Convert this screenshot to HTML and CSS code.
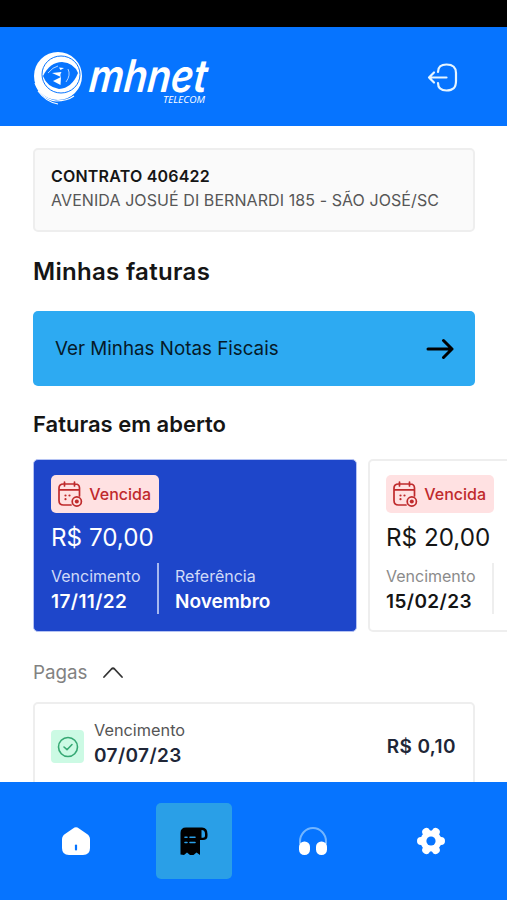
FILE: index.html
```html
<!DOCTYPE html>
<html lang="pt-BR">
<head>
<meta charset="utf-8">
<meta name="viewport" content="width=device-width, initial-scale=1">
<title>Minhas faturas</title>
<link rel="stylesheet" href="styles.css">
</head>
<body>
<svg class="symbols" aria-hidden="true">
  <symbol id="calendar" viewBox="0 0 26 28">
    <g fill="none" stroke="currentColor" stroke-width="1.7" stroke-linecap="round">
      <path d="M14 25H6.500Q2 25 2 20.500V8Q2 4 6.500 4H18Q22.500 4 22.500 8V16M2 9.800H22.500M7.500 2V6M17.500 2V6"/>
      <circle cx="19.800" cy="21.500" r="4.600"/>
    </g>
    <g fill="currentColor"><circle cx="19.800" cy="21.500" r="2"/><circle cx="8.500" cy="15.500" r="1.100"/><circle cx="12.500" cy="15.500" r="1.100"/><circle cx="8.500" cy="19.200" r="1.100"/></g>
  </symbol>
</svg>
<div class="app">
  <div class="status"></div>
  <header class="header">
    <svg class="logo" width="182" height="60" viewBox="0 0 182 60">
      <ellipse cx="25" cy="28" rx="24" ry="24" fill="#fff"/>
      <g fill="none" stroke="#fff" stroke-width="1.200">
        <path d="M2 35Q8 51 23 53Q34 53 41 48"/>
        <path d="M5 43Q13 54 25 56"/>
      </g>
      <ellipse cx="28" cy="26.500" rx="19" ry="18.500" fill="none" stroke="#0674ff" stroke-width="1"/>
      <path d="M10 28Q17 14 29 14Q41 15 45 25Q39 40 26 41Q14 39 10 28Z" fill="#0674ff"/>
      <g fill="#fff"><path d="M19 25L28.500 24Q26.500 27 28 29Z"/><path d="M20 33L28 29L27.500 37Z"/><path d="M26 19.500L31 20L27.500 22Z"/></g>
      <path d="M35 21Q38 27 33 34M15 25Q20 19 25 18" fill="none" stroke="#fff" stroke-width=".7"/>
      <g transform="translate(55 44) skewX(-6)"><text class="brand" textLength="118" lengthAdjust="spacingAndGlyphs">mhnet</text></g>
      <text class="tagline" x="130" y="54.500" textLength="42" lengthAdjust="spacingAndGlyphs">TELECOM</text>
    </svg>
    <svg class="logout" width="32" height="32" viewBox="0 0 32 32" fill="none" stroke="#e6f5ff" stroke-width="2.200" stroke-linecap="round" stroke-linejoin="round">
      <path d="M11 11C11 6 14 3.500 19.500 3.500C26 3.500 29 6 29 12V20C29 27 26 29.500 19.500 29.500C14 29.500 11 27 11 22M19.500 16.500H2M7 11.500L2 16.500L7 21.500"/>
    </svg>
  </header>
  <main class="content">
    <section class="contract"><strong>CONTRATO 406422</strong><span>AVENIDA JOSUÉ DI BERNARDI 185 - SÃO JOSÉ/SC</span></section>
    <h1>Minhas faturas</h1>
    <a class="notes"><span>Ver Minhas Notas Fiscais</span>
      <svg width="28" height="22" viewBox="0 0 28 22" fill="none" stroke="#000" stroke-width="3" stroke-linecap="round" stroke-linejoin="round"><path d="M2 11H26M17.500 2.500L26 11L17.500 19.500"/></svg>
    </a>
    <h2>Faturas em aberto</h2>
    <div class="carousel">
      <article class="bill active">
        <div class="badge"><svg width="26" height="28"><use href="#calendar"/></svg><span>Vencida</span></div>
        <div class="amount">R$ 70,00</div>
        <div class="details">
          <div class="detail due"><span>Vencimento</span><strong>17/11/22</strong></div>
          <div class="detail ref"><span>Referência</span><strong>Novembro</strong></div>
        </div>
      </article>
      <article class="bill">
        <div class="badge"><svg width="26" height="28"><use href="#calendar"/></svg><span>Vencida</span></div>
        <div class="amount">R$ 20,00</div>
        <div class="details">
          <div class="detail due"><span>Vencimento</span><strong>15/02/23</strong></div>
        </div>
      </article>
    </div>
    <div class="toggle"><span>Pagas</span><svg width="22" height="13" viewBox="0 0 22 13" fill="none" stroke="#333" stroke-width="1.800" stroke-linecap="round" stroke-linejoin="round"><path d="M2 11L9.500 3Q11 1.500 12.500 3L20 11"/></svg></div>
    <article class="paid">
      <div class="check"><svg width="22" height="22" viewBox="0 0 22 22" fill="none" stroke="#35a873" stroke-width="1.600" stroke-linecap="round" stroke-linejoin="round"><circle cx="11" cy="11" r="9.500"/><path d="M7 11L10 13.700L15 8.500"/></svg></div>
      <div class="paid-date"><span>Vencimento</span><strong>07/07/23</strong></div>
      <strong class="paid-amount">R$ 0,10</strong>
    </article>
  </main>
  <nav class="nav">
    <a class="tab"><svg width="28" height="28" viewBox="0 0 28 28"><path fill="#fff" d="M11 1.500Q14-.8 17 1.500L25 7Q28 9 28 12.500V21Q28 28 21 28H7Q0 28 0 21V12.500Q0 9 3 7Z"/><path d="M14 18.500V22.500" stroke="#0674ff" stroke-width="2.200" stroke-linecap="round"/></svg></a>
    <a class="tab selected"><svg width="28" height="29" viewBox="0 0 28 29"><path d="M6 .5H22Q27.500 .5 27.500 7V9Q27.500 13 23 13H20V28L16.500 25.500L13.500 28L10 28L7 25.500L4 28L.5 27.500V6Q.5 .5 6 .5Z"/><path d="M21.500 3Q25 3 25 7V9Q25 10.800 23 10.800H21.500Z" fill="#2a9fe7"/><path d="M5 10.200H7M10 10.200H15M5 15.500H7M10 15.500H15" stroke="#2a9fe7" stroke-width="1.600" stroke-linecap="round"/></svg></a>
    <a class="tab"><svg width="28" height="29" viewBox="0 0 28 29"><path d="M1 17V14.500A13 13.500 0 0 1 27 14.500V17" fill="none" stroke="#72b5ff" stroke-width="2"/><rect y="14.500" width="11" height="13.500" rx="5.300" fill="#fff"/><rect x="17" y="14.500" width="11" height="13.500" rx="5.300" fill="#fff"/></svg></a>
    <a class="tab"><svg width="28" height="28" viewBox="0 0 28 28"><g stroke="#fff" stroke-width="8" stroke-linecap="round"><path d="M4 14H24M9.200 5L18.800 23M18.800 5L9.200 23"/></g><circle cx="14" cy="14" r="10.600" fill="#fff"/><circle cx="14" cy="14" r="4.600" fill="#0674ff"/></svg></a>
  </nav>
</div>
</body>
</html>
```
FILE: styles.css
```css
* { box-sizing: border-box; }
body { margin: 0; background: #fff; font-family: Inter, sans-serif; color: #151515; }
svg { display: block; flex: none; }
.symbols { display: none; }
.app { height: 900px; display: flex; flex-direction: column; overflow: hidden; }
.status { height: 27px; background: #000; flex: none; }
.header { height: 99px; flex: none; background: #0674ff; display: flex; align-items: center; justify-content: space-between; padding: 3px 48px 0 33px; }
.logo { overflow: visible; }
.logout { margin-top: -2px; }
.brand { font: italic 600 45px Inter, sans-serif; fill: #fff; }
.tagline { font: italic 400 9.5px "Open Sans", sans-serif; fill: #fff; }
.content { flex: 1; min-height: 0; overflow: hidden; padding: 22px 32px 0 33px; white-space: nowrap; }
.contract { height: 84px; padding: 14px 16px; border: 2px solid #eee; border-radius: 5px; background: #fafafa; font-size: 16px; line-height: 24px; display: flex; flex-direction: column; }
.contract strong { font-weight: 600; letter-spacing: .2px; }
.contract span { color: #565656; letter-spacing: .08px; }
h1 { margin: 22px 0 21px; font-size: 24px; line-height: 36px; font-weight: 600; letter-spacing: .3px; }
.notes { height: 75px; padding: 0 21px 0 22px; border-radius: 5px; background: #2daaf2; color: #061a29; display: flex; align-items: center; justify-content: space-between; font-size: 18.8px; }
h2 { margin: 23px 0 19px; font-size: 22px; line-height: 31px; font-weight: 600; }
.carousel { display: flex; gap: 11px; width: 474px; overflow: hidden; }
.bill { width: 324px; height: 173px; flex: none; padding: 14px 16px; border: 2px solid #eee; border-radius: 5px; }
.active { background: #1e46ca; border: 1px solid #b5c3f3; color: #fff; padding: 15px 17px; }
.badge { width: 108px; height: 38px; padding: 0 8px 0 6px; border-radius: 5px; background: #ffe1e2; color: #bf2a2c; display: flex; align-items: center; justify-content: space-between; font-size: 16px; font-weight: 500; }
.amount { margin-top: 9px; font-size: 24.2px; line-height: 32px; }
.details { display: flex; margin-top: 9px; height: 52px; }
.detail { display: flex; flex-direction: column; padding-top: 1px; font-size: 16px; line-height: 25px; }
.detail span { color: #8b8b8b; }
.active .detail span { color: #d0daf8; }
.detail strong { font-size: 19px; font-weight: 600; line-height: 25px; }
.due { width: 108px; height: 51px; border-right: 2px solid #eee; }
.due strong { letter-spacing: .4px; }
.active .due { border-color: #a6b8ef; }
.ref { margin-left: 16px; }
.toggle { height: 30px; margin-top: 25px; display: flex; align-items: center; gap: 14px; color: #828282; font-size: 18.8px; }
.paid { height: 94px; margin-top: 15px; padding: 0 17px 5px 16px; border: 2px solid #eee; border-radius: 5px; display: flex; align-items: center; }
.check { width: 33px; height: 33px; border-radius: 4px; background: #ccfae4; display: flex; align-items: center; justify-content: center; }
.paid-date { margin: -7px 0 0 10px; display: flex; flex-direction: column; font-size: 16.3px; line-height: 26px; color: #555; }
.paid-date strong, .paid-amount { color: #202637; font-size: 19px; font-weight: 600; letter-spacing: .4px; }
.paid-amount { margin-left: auto; }
.nav { height: 118px; flex: none; background: #0674ff; display: flex; align-items: center; justify-content: space-between; padding: 0 38px; }
.tab { width: 76px; height: 76px; border-radius: 5px; display: flex; align-items: center; justify-content: center; }
.selected { background: #2a9fe7; }
```
